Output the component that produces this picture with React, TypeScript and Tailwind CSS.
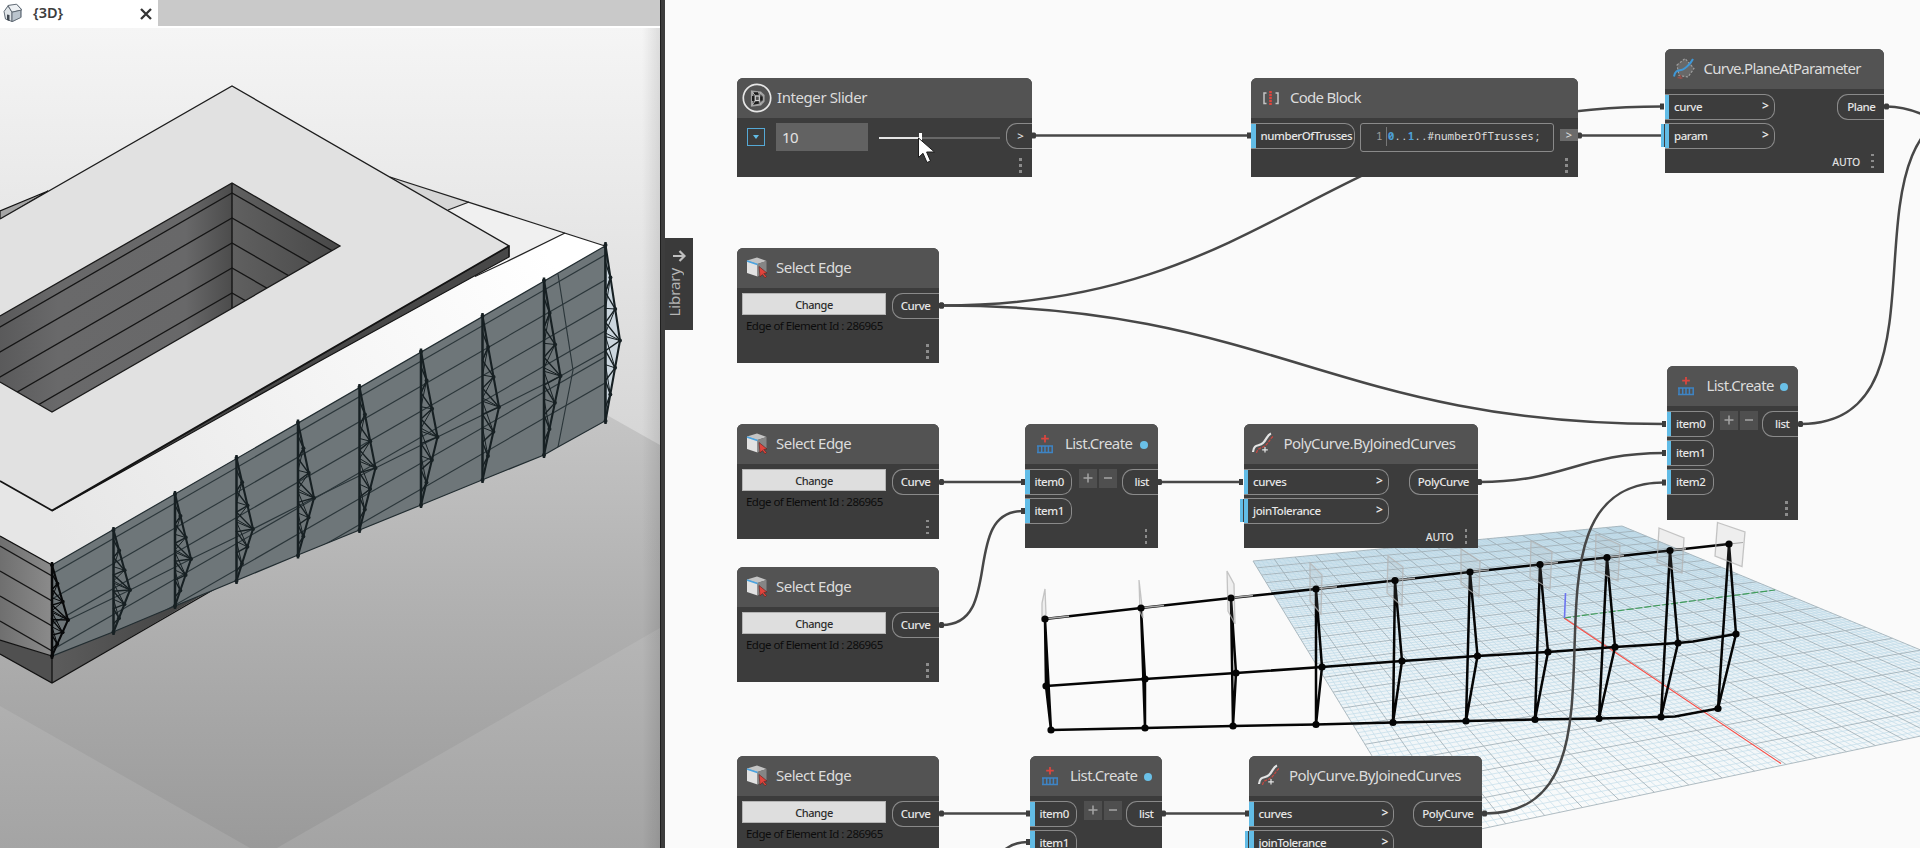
import React from "react";

type Pt = [number, number];
const pts = (a: Pt[]) => a.map((p) => p.join(",")).join(" ");
const lerp = (a: Pt, b: Pt, t: number): Pt => [a[0] + (b[0] - a[0]) * t, a[1] + (b[1] - a[1]) * t];

/* ---------- building viewport ---------- */

const trussTop: Pt[] = [[52, 565], [113.5, 530], [175, 494], [236.5, 458], [298, 422.5], [359.5, 387], [421, 351.5], [482.5, 316], [544, 280.5], [605.5, 245]];
const trussMid: Pt[] = [[68, 620], [130, 590], [191, 559], [253, 529], [314, 498], [375.5, 468], [437.5, 437], [499, 407], [560.5, 376], [620, 340.5]];
const trussBot: Pt[] = [[52, 656], [113.5, 632], [175, 606], [236.5, 581], [298, 555.5], [359.5, 530], [421, 505], [482.5, 480], [544, 455], [605.5, 421]];

function BuildingTruss({ i }: { i: number }) {
  const t = trussTop[i], m = trussMid[i], b = trussBot[i];
  const color = i === 0 ? "#08090a" : "#172023";
  const outer: Pt[] = [t, lerp(t, m, 0.34), lerp(t, m, 0.67), m, lerp(m, b, 0.34), lerp(m, b, 0.67), b];
  const inner = (f: number): Pt => [t[0], t[1] + (b[1] - t[1]) * f];
  const web: Pt[] = [inner(0.1), outer[1], inner(0.27), outer[2], inner(0.44), outer[3], inner(0.6), outer[4], inner(0.77), outer[5], inner(0.92)];
  const web2: Pt[] = [inner(0.27), outer[1], inner(0.36), outer[2], inner(0.5), outer[3], inner(0.52), outer[4], inner(0.68), outer[5]];
  return (
    <g stroke={color} fill="none">
      {i === 9 && <polygon points={pts([t, m, b])} fill="#cbd6de" stroke="none" />}
      <line x1={t[0]} y1={t[1] - 3} x2={b[0]} y2={b[1] + 3} strokeWidth="2.5" />
      <polyline points={pts([t, m, b])} strokeWidth="2.1" />
      <polyline points={pts(web)} strokeWidth="1.4" />
      <polyline points={pts(web2)} strokeWidth="1" />
      {[t, ...outer.slice(1, 6), b].map((p, k) => (
        <circle key={k} cx={p[0]} cy={p[1]} r="2" fill={color} stroke="none" />
      ))}
    </g>
  );
}

function Building() {
  const facade: Pt[] = [[52, 565], [605, 246], [605, 421], [558, 447], [544, 455], [482, 480], [421, 505], [298, 555], [175, 606], [113, 632], [52, 656]];
  const hole: Pt[] = [[232, 183], [340, 246], [52, 412], [0, 382], [0, 316]];
  return (
    <svg className="block h-[820px] w-[660px]" viewBox="0 28 660 820">
      <defs>
        <linearGradient id="sky" x1="0" y1="0" x2="0" y2="1">
          <stop offset="0" stopColor="#f5f5f5" /><stop offset="0.25" stopColor="#e6e6e6" />
          <stop offset="0.5" stopColor="#d6d6d6" /><stop offset="1" stopColor="#cfcfcf" />
        </linearGradient>
        <linearGradient id="ground" gradientUnits="userSpaceOnUse" x1="0" y1="420" x2="0" y2="848">
          <stop offset="0" stopColor="#c4c4c4" /><stop offset="0.45" stopColor="#b0b0b0" /><stop offset="1" stopColor="#9a9a9a" />
        </linearGradient>
        <linearGradient id="apron" gradientUnits="userSpaceOnUse" x1="0" y1="628" x2="0" y2="848">
          <stop offset="0" stopColor="#b6b6b6" /><stop offset="1" stopColor="#a4a4a4" />
        </linearGradient>
        <linearGradient id="parapet" gradientUnits="userSpaceOnUse" x1="60" y1="540" x2="540" y2="240">
          <stop offset="0" stopColor="#e6e6e6" /><stop offset="0.6" stopColor="#f6f6f6" /><stop offset="1" stopColor="#ffffff" />
        </linearGradient>
        <linearGradient id="wellL" gradientUnits="userSpaceOnUse" x1="0" y1="0" x2="232" y2="0">
          <stop offset="0" stopColor="#5a5a5b" /><stop offset="0.25" stopColor="#69696a" /><stop offset="0.8" stopColor="#686869" /><stop offset="1" stopColor="#4c4c4c" />
        </linearGradient>
        <linearGradient id="wellR" gradientUnits="userSpaceOnUse" x1="232" y1="0" x2="340" y2="0">
          <stop offset="0" stopColor="#606060" /><stop offset="1" stopColor="#484848" />
        </linearGradient>
        <linearGradient id="edge" x1="0" y1="0" x2="1" y2="0">
          <stop offset="0" stopColor="#000" stopOpacity="0" /><stop offset="1" stopColor="#000" stopOpacity="0.1" />
        </linearGradient>
        <linearGradient id="wallL" x1="0" y1="0" x2="1" y2="0">
          <stop offset="0" stopColor="#6f6f6f" /><stop offset="1" stopColor="#8b8b8b" />
        </linearGradient>
        <linearGradient id="under" gradientUnits="userSpaceOnUse" x1="52" y1="0" x2="218" y2="0">
          <stop offset="0" stopColor="#5c5c5c" /><stop offset="0.6" stopColor="#4a4a4a" /><stop offset="1" stopColor="#3c3c3c" />
        </linearGradient>
        <clipPath id="facadeClip"><polygon points={pts(facade)} /></clipPath>
        <clipPath id="holeClip"><polygon points={pts(hole)} /></clipPath>
        <clipPath id="leftClip"><polygon points="0,536 52,565 52,656 0,640" /></clipPath>
      </defs>
      <rect x="0" y="28" width="660" height="820" fill="url(#sky)" />
      <polygon points="0,380 540,380 605,414 660,445 660,848 0,848" fill="url(#ground)" />
      <polygon points="0,706 250,848 0,848" fill="url(#apron)" />
      <polygon points="660,628 277,848 660,848" fill="url(#apron)" />
      <rect x="642" y="28" width="18" height="820" fill="url(#edge)" />

      <polygon points="0,211 48,191 0,220" fill="#a5a5a5" stroke="#111" strokeWidth="1.2" />
      {/* sloped parapet and side walls */}
      <polygon points="390,177 469,202 565,233 605,246 52,565 0,536 0,440" fill="url(#parapet)" />
      <polygon points="390,177 469,202 448,210" fill="#d6d6d6" />
      <polygon points="448,210 469,202 565,233 509,262" fill="#f0f0f0" />
      <polyline points="390,177 605,246" stroke="#222" strokeWidth="1.3" fill="none" />
      <polyline points="448,210 469,202" stroke="#222" strokeWidth="1.3" fill="none" />
      <polyline points="565,233 508,261 475,276.500" stroke="#222" strokeWidth="1.3" fill="none" />

      {/* top slab */}
      <polygon points="509,246 509,257 320,361 52,511" fill="#484848" stroke="#141414" strokeWidth="1.2" />
      <polygon points="0,219 232,86 509,246 52,510 0,481" fill="#e1e1e1" />
      <polyline points="0,219 232,86 509,246 509,257" stroke="#1c1c1c" strokeWidth="1.3" fill="none" />
      <polyline points="509,246 52,510.5 0,481" stroke="#141414" strokeWidth="1.7" fill="none" />

      {/* courtyard */}
      <g clipPath="url(#holeClip)">
        <rect x="0" y="170" width="232" height="260" fill="url(#wellL)" />
        <rect x="232" y="170" width="120" height="160" fill="url(#wellR)" />
        {[193, 218, 243, 268, 293].map((y) => (
          <polyline key={y} points={`-10,${y + 139.7} 232,${y} 350,${y + 68}`} stroke="#151515" strokeWidth="1.3" fill="none" />
        ))}
        <line x1="232" y1="183" x2="232" y2="308" stroke="#151515" strokeWidth="1.4" />
      </g>
      <polyline points="0,316 232,183 340,246 52,412 0,382" stroke="#1a1a1a" strokeWidth="1.3" fill="none" />

      {/* lower volume */}
      <polygon points="0,640 52,656 52,683 0,654" fill="#505050" />
      <polygon points="52,656 218,586 52,683" fill="url(#under)" />
      <polyline points="0,654 52,683 218,587" stroke="#111" strokeWidth="1.3" fill="none" />
      <line x1="52" y1="656" x2="52" y2="683" stroke="#111" strokeWidth="1.3" />
      <polygon points="0,536 52,565 52,656 0,640" fill="url(#wallL)" />
      <g clipPath="url(#leftClip)" stroke="#151515" strokeWidth="1.3">
        {[546, 571, 596, 621].map((y) => <line key={y} x1="0" y1={y} x2="52" y2={y + 30} />)}
      </g>
      <polyline points="0,536 52,565" stroke="#111" strokeWidth="1.3" />
      <polyline points="0,640 52,656" stroke="#111" strokeWidth="1.3" />

      <polygon points={pts(facade)} fill="#6e7679" />
      <g clipPath="url(#facadeClip)" stroke="#2b363a" strokeWidth="1.15" fill="none">
        {[255, 280, 305, 331, 357, 383].map((y) => (
          <line key={y} x1="605" y1={y} x2="52" y2={y + 319} />
        ))}
        <polyline points={pts(trussMid.slice(0, 9).concat([[573, 369], [605, 351]]))} />
        <polyline points="558,274 573,370 558,447" />
      </g>
      <polygon points={pts(facade)} fill="none" stroke="#222d31" strokeWidth="1.2" />
      {trussTop.map((_, i) => <BuildingTruss key={i} i={i} />)}
    </svg>
  );
}

/* ---------- background preview: ground grid and frame ---------- */

const quad: Pt[] = [[1253, 561], [1622, 526], [2058, 707], [1424, 841]];
function project(u: number, v: number): Pt {
  const [[x0, y0], [x1, y1], [x2, y2], [x3, y3]] = quad;
  const dx1 = x1 - x2, dx2 = x3 - x2, dx3 = x0 - x1 + x2 - x3;
  const dy1 = y1 - y2, dy2 = y3 - y2, dy3 = y0 - y1 + y2 - y3;
  const det = dx1 * dy2 - dx2 * dy1;
  const g = (dx3 * dy2 - dx2 * dy3) / det;
  const h = (dx1 * dy3 - dx3 * dy1) / det;
  const w = g * u + h * v + 1;
  return [
    ((x1 - x0 + g * x1) * u + (x3 - x0 + h * x3) * v + x0) / w,
    ((y1 - y0 + g * y1) * u + (y3 - y0 + h * y3) * v + y0) / w,
  ];
}
const seg = (a: Pt, b: Pt) => `M${a[0].toFixed(1)} ${a[1].toFixed(1)}L${b[0].toFixed(1)} ${b[1].toFixed(1)}`;
let minor = "", major = "";
for (let k = 0; k <= 100; k++) {
  const f = k / 100;
  const d = seg(project(f, 0), project(f, 1)) + seg(project(0, f), project(1, f));
  if (k % 5 === 0) major += d; else minor += d;
}

const fTop: Pt[] = [[1045, 619], [1141, 608], [1231, 598], [1316, 589], [1395, 580.5], [1470, 572], [1540, 564.5], [1607, 557.5], [1670, 550.5], [1729, 544]];
const fMid: Pt[] = [[1046, 686], [1145, 679], [1236, 673], [1322, 667], [1402, 661], [1477.5, 656], [1548, 652], [1615, 647], [1678, 643], [1736, 634]];
const fBot: Pt[] = [[1051, 730], [1145, 728], [1233, 726], [1316, 724.5], [1393, 722.5], [1466, 721], [1535, 719.5], [1599, 718.5], [1661, 717], [1718, 708.5]];
const planes: Pt[][] = [
  [[1045, 589], [1042, 603], [1042, 620], [1046, 614]],
  [[1139, 580], [1140, 612], [1143, 618], [1142, 606]],
  [[1227, 571], [1234, 584], [1235, 624], [1228, 611]],
  [[1310, 563], [1322, 575], [1321, 614], [1310, 601]],
  [[1388, 556], [1403, 567], [1402, 606], [1387, 593]],
  [[1461, 549], [1480, 561], [1479, 597], [1461, 584]],
  [[1531, 541], [1552, 552], [1550, 589], [1530, 577]],
  [[1596, 534], [1620, 545], [1618, 581], [1595, 570]],
  [[1659, 528], [1684, 538], [1682, 573], [1657, 562]],
  [[1717.5, 522.5], [1745, 532], [1742, 566.5], [1715, 556]],
];

const wire = (x1: number, y1: number, x2: number, y2: number) => {
  const c = 0.45 * Math.hypot(x2 - x1, y2 - y1);
  return `M${x1} ${y1}C${x1 + c} ${y1} ${x2 - c} ${y2} ${x2} ${y2}`;
};
const wires: [number, number, number, number][] = [
  [1034, 135.5, 1249, 135.5], [1580, 135.5, 1663, 135.5], [942, 305.5, 1662, 106.5], [942, 305.5, 1664, 424],
  [942, 482, 1023, 482], [942, 625, 1023, 511], [1160, 482, 1241, 482], [1480, 482, 1664, 453],
  [1485, 813.5, 1664, 482.5], [1801, 424, 1988, 106], [942, 813.5, 1028, 813.5], [942, 957, 1028, 842],
  [1164, 813.5, 1247, 813.5],
];

function Scene() {
  return (
    <svg className="absolute inset-0 h-[848px] w-[1255px]" viewBox="665 0 1255 848">
      <defs>
        <linearGradient id="haze" gradientUnits="userSpaceOnUse" x1="0" y1="526" x2="0" y2="820">
          <stop offset="0" stopColor="#cfe2ec" /><stop offset="0.35" stopColor="#e6f0f5" /><stop offset="1" stopColor="#fafbfb" />
        </linearGradient>
      </defs>
      <polygon points={pts(quad)} fill="url(#haze)" />
      <path d={minor} stroke="#a9cfe2" strokeWidth="0.75" opacity="0.6" />
      <path d={major} stroke="#92a3ac" strokeWidth="0.95" opacity="0.75" />
      <path d="M1564 618L1781 763.5" stroke="#fa4a42" strokeWidth="1.1" />
      <path d="M1564 618L1775 590" stroke="#3f9d5c" strokeWidth="1.2" strokeDasharray="7 2" />
      <path d="M1564.500 618L1565.500 593" stroke="#6c74f0" strokeWidth="1.6" />

      <g stroke="#050505" strokeWidth="2.5" fill="none" strokeLinejoin="round">
        <polyline points={pts(fTop)} />
        <polyline points={pts([...fMid.slice(0, 9), [1693, 641.5], fMid[9]])} />
        <polyline points={pts([...fBot.slice(0, 9), [1675, 716.5], fBot[9]])} />
        {fTop.map((t, i) => <polygon key={i} points={pts([t, fMid[i], fBot[i]])} />)}
      </g>
      {planes.map((p, i) => (
        <polygon key={i} points={pts(p)} fill="#9a9a9a" fillOpacity="0.12" stroke="#b3b3b3" strokeOpacity="0.75" strokeWidth="1.3" />
      ))}
      {fTop.slice(0, 9).map((t, i) => {
        const w = 24 - i;
        return <line key={i} x1={t[0] + 3} y1={t[1] - 0.4} x2={t[0] + w} y2={t[1] - w * 0.112} stroke="#a8a8a8" strokeWidth="1.5" />;
      })}
      <line x1="1729" y1="544" x2="1743" y2="542.500" stroke="#a8a8a8" strokeWidth="1.2" />
      {[...fTop, ...fMid, ...fBot].map((p, i) => <circle key={i} cx={p[0]} cy={p[1]} r="3.6" fill="#050505" />)}

      <g stroke="#474747" strokeWidth="2.5" fill="none">
        {wires.map((w, i) => <path key={i} d={wire(...w)} />)}
        <path d="M1887 106.500C1905 106.500 1922 112 1945 126" />
      </g>
      <g fill="#3c3c3c">
        {wires.map(([a, b, c, d], i) => (
          <g key={i}>
            <rect x={a - 3} y={b - 3} width="5" height="6" rx="1.500" />
            <rect x={c - 2} y={d - 3} width="4" height="6" />
          </g>
        ))}
        <rect x="1884" y="103.500" width="5" height="6" rx="1.500" />
      </g>
    </svg>
  );
}

/* ---------- node icons ---------- */

function CubeIcon() {
  return (
    <svg className="h-6 w-6" viewBox="0 0 24 24">
      <path d="M2 4.500L12 1.500L21.500 5L12.500 8Z" fill="#c4c4c4" />
      <path d="M2 4.500L12.500 8V20.500L2 17Z" fill="#e2e2e2" />
      <path d="M12.500 8L21.500 5V16L12.500 20.500Z" fill="#858585" />
      <path d="M2 5L12.500 8.500" stroke="#4aa3e0" strokeWidth="1.800" />
      <path d="M14 10.500L22 17L18.800 17.500L21.500 20.500L20 21.800L17.500 18.600L15 20.800Z" fill="#e0443c" stroke="#5a2420" strokeWidth="0.6" />
    </svg>
  );
}
function ListIcon() {
  return (
    <svg className="h-6 w-6" viewBox="0 0 24 24">
      <path d="M12 3V10.500M8.200 6.700H15.800" stroke="#d9463f" strokeWidth="1.800" />
      <path d="M4 14H20M4 20.500H20M5 13.200V21.300M8.700 14V20.500M12 14V20.500M15.400 14V20.500M19.200 13.200V21.300" stroke="#3e84c4" strokeWidth="1.500" />
    </svg>
  );
}
function PolyIcon() {
  return (
    <svg className="h-6 w-6" viewBox="0 0 24 24" fill="none">
      <path d="M2 20C3 11 8 15 12 11S16 3 20 1.500" stroke="#e4e4e4" strokeWidth="2.200" />
      <path d="M5.500 21C6.500 15 11 17 15 13S19 7 22 4.500" stroke="#c9473f" strokeWidth="1.200" strokeDasharray="3 1.200" />
      <path d="M14 15V20.600M11.200 17.800H16.800" stroke="#e4e4e4" strokeWidth="1.200" />
    </svg>
  );
}
function PlaneIcon() {
  return (
    <svg className="h-6 w-6" viewBox="0 0 24 24" fill="none">
      <path d="M5 8L13 1.500L22 11.500L16 20L7 18.500Z" fill="#686868" stroke="#a2a2a2" strokeWidth="1.100" strokeDasharray="2.200 1.600" />
      <path d="M2 19.500C3.500 11 8.500 15 12.500 11.500S18 8 21 2" stroke="#3f97d6" strokeWidth="2" />
      <path d="M5.500 20.500L10.500 21M8.500 18V22" stroke="#94504b" strokeWidth="1.400" />
    </svg>
  );
}
function CodeIcon() {
  return (
    <svg className="h-5 w-5" viewBox="0 0 20 20" fill="none">
      <path d="M5.500 5H3V15.500H5.500M14.500 5H17V15.500H14.500" stroke="#c4c4c4" strokeWidth="1.500" />
      <path d="M9.500 3V17" stroke="#e0443c" strokeWidth="2.600" strokeDasharray="2.200 0.800" />
    </svg>
  );
}
function SliderIcon() {
  return (
    <svg className="h-[30px] w-[30px]" viewBox="0 0 30 30" fill="none">
      <circle cx="15" cy="15" r="13.700" stroke="#e6e6e6" strokeWidth="1.700" />
      <path d="M10 8.500L18.500 9.500L21.500 12.500V18L18.500 21.500L10 22.500Z" stroke="#a2a2a2" strokeWidth="2.200" />
      <path d="M11.500 10.500H16M11 20.500L16.500 19.500M19.500 13.500V17.500M11.200 13V18" stroke="#1c1c1c" strokeWidth="2.400" />
      <rect x="13.300" y="13" width="4" height="4.500" stroke="#d6d6d6" strokeWidth="1.100" />
      <path d="M10 8.500L13 12.500M10 22.500L13 18M18.500 9.500L17.500 12.500M18.500 21.500L17.500 18" stroke="#b9b9b9" strokeWidth="1" />
    </svg>
  );
}

/* ---------- nodes ---------- */

function Dots() {
  return (
    <div className="flex flex-col gap-[3.5px]">
      <i className="h-[2.5px] w-[2.5px] bg-[#8c8c8c]" />
      <i className="h-[2.5px] w-[2.5px] bg-[#8c8c8c]" />
      <i className="h-[2.5px] w-[2.5px] bg-[#8c8c8c]" />
    </div>
  );
}

function Node({ place, icon, title, titleClass = "", dot, auto, children }: {
  place: string; icon: React.ReactNode; title: string; titleClass?: string; dot?: boolean; auto?: boolean; children: React.ReactNode;
}) {
  return (
    <section className={`absolute flex flex-col rounded-t-[6px] bg-[#3c3c3c] ${place}`}>
      <header className="flex h-10 shrink-0 items-center rounded-t-[6px] bg-[#535353]">
        <span className="flex w-[39px] shrink-0 items-center justify-center">{icon}</span>
        <span className={`mb-px whitespace-nowrap text-[15px] text-[#dcdcdc] ${titleClass}`}>{title}</span>
        {dot && <i className="mt-0.5 mr-2.5 ml-auto h-2 w-2 rounded-full bg-[#6ac0e7]" />}
      </header>
      <div className="flex flex-1 items-start justify-between pt-[5px]">{children}</div>
      <footer className="flex h-[23px] items-center justify-end pr-[10.5px]">
        {auto && <span className="mt-[3px] mr-[11px] text-[10.5px] font-medium tracking-[-0.2px] text-[#e0e0e0]">AUTO</span>}
        <Dots />
      </footer>
    </section>
  );
}

function InPort({ label, width, arrow, outer }: { label: string; width: string; arrow?: boolean; outer?: boolean }) {
  return (
    <div className={`relative flex h-[25.5px] items-center rounded-r-[10px] border border-l-0 border-[#8a8a8a] text-[11.5px] font-medium tracking-[-0.45px] text-[#e6e6e6] ${width}`}>
      <i className="h-6 w-[4.5px] shrink-0 bg-[#62bce6]" />
      {outer && <i className="absolute top-0 -left-1 h-[23px] w-1 border-r border-[#3c3c3c] bg-[#62bce6]" />}
      <span className="mb-px ml-[5px] whitespace-nowrap">{label}</span>
      {arrow && <span className="mr-[5px] mb-px ml-auto text-[12px] font-semibold">&gt;</span>}
    </div>
  );
}
function OutPort({ label, width }: { label: string; width: string }) {
  return (
    <div className={`flex h-[25.5px] shrink-0 items-center justify-end rounded-l-[11px] border border-r-0 border-[#8a8a8a] pr-[8.5px] pb-px text-[11.5px] font-medium tracking-[-0.45px] text-[#e6e6e6] ${width}`}>
      {label}
    </div>
  );
}
const Ports = ({ children }: { children: React.ReactNode }) => <div className="flex flex-col gap-[3.5px]">{children}</div>;

function SelectEdge({ place }: { place: string }) {
  return (
    <Node place={place} icon={<CubeIcon />} title="Select Edge" titleClass="tracking-[-0.5px]">
      <div className="flex flex-col pl-[5px]">
        <button className="h-[22px] w-[144px] border border-[#b4b4b4] bg-[#dedede] text-[11px] leading-[17px] font-medium tracking-[-0.45px] text-[#2c2c2c]">Change</button>
        <span className="mt-[1.5px] ml-1 whitespace-nowrap text-[11.5px] leading-[18px] tracking-[-0.52px] text-[#0c0c0c]">Edge of Element Id : 286965</span>
      </div>
      <OutPort label="Curve" width="w-[47px]" />
    </Node>
  );
}

function ListCreate({ place, items }: { place: string; items: string[] }) {
  return (
    <Node place={place} icon={<ListIcon />} title="List.Create" titleClass="ml-px tracking-[-0.58px]" dot>
      <Ports>{items.map((it) => <InPort key={it} label={it} width="w-[47px]" />)}</Ports>
      <div className="ml-[3px] flex gap-[2px]">
        <span className="flex h-[18.5px] w-[18px] items-center justify-center bg-[#4f4f4f]"><svg className="h-2.5 w-2.5" viewBox="0 0 10 10"><path d="M5 0.500V9.500M0.500 5H9.500" stroke="#a5a5a5" strokeWidth="1.500" /></svg></span>
        <span className="flex h-[18.5px] w-[18px] items-center justify-center bg-[#4f4f4f]"><svg className="h-2.5 w-2.5" viewBox="0 0 10 10"><path d="M1 5H9" stroke="#a5a5a5" strokeWidth="1.500" /></svg></span>
      </div>
      <OutPort label="list" width="w-[36px]" />
    </Node>
  );
}

function PolyCurve({ place }: { place: string }) {
  return (
    <Node place={place} icon={<PolyIcon />} title="PolyCurve.ByJoinedCurves" titleClass="ml-px tracking-[-0.52px]" auto>
      <Ports>
        <InPort label="curves" width="w-[145px]" arrow />
        <InPort label="joinTolerance" width="w-[145px]" arrow outer />
      </Ports>
      <OutPort label="PolyCurve" width="w-[69px]" />
    </Node>
  );
}

export default function App() {
  return (
    <div className="flex h-[848px] w-[1920px] overflow-hidden font-['Noto_Sans','Open_Sans',sans-serif]">
      <div className="flex w-[660px] shrink-0 flex-col">
        <div className="flex h-[26px] bg-[#c9c9c9]">
          <div className="flex w-[158px] items-center bg-white pr-1.5 pl-[3px]">
            <svg className="h-5 w-5" viewBox="0 0 20 20">
              <path d="M1 8L5 2L14 1L19 6V14L10 19L2 16Z" fill="#b9c1c9" />
              <path d="M1 8.500L5 3L9 9V18.500L2.500 16Z" fill="#dfe4e8" stroke="#59636d" strokeWidth="0.900" />
              <path d="M5 2.500L13.500 1.200L18.800 7L9 9.200Z" fill="#eef1f4" stroke="#59636d" strokeWidth="0.900" />
              <path d="M9 9.200L17.800 7.200V14.500L9 18.600Z" fill="#bac4cd" stroke="#59636d" strokeWidth="0.900" />
              <path d="M4 17V11.500L6.500 12V18Z" fill="#3f474f" />
            </svg>
            <span className="ml-2.5 text-[14.5px] font-semibold text-[#3d3d3d]">{"{3D}"}</span>
            <svg className="mt-px ml-auto h-3 w-3" viewBox="0 0 12 12"><path d="M1 1L11 11M11 1L1 11" stroke="#333" strokeWidth="2.300" /></svg>
          </div>
        </div>
        <div className="h-0.5 bg-white" />
        <Building />
      </div>
      <div className="w-[5px] shrink-0 border-l border-[#1f1f1f] bg-[#3d3d3d]" />
      <main className="relative flex-1 overflow-hidden bg-[#fafafa]">
        <Scene />
        <aside className="absolute top-[238px] left-0 flex h-[92px] w-[27.5px] flex-col bg-[#3a3a3a] pt-[11px] text-[#b5b5b5]">
          <svg className="ml-[7px] h-3.5 w-3.5" viewBox="0 0 14 14" fill="none"><path d="M1 7H12.500M7.500 2L12.500 7L7.500 12" stroke="#c0c0c0" strokeWidth="2.200" /></svg>
          <span className="mt-[5px] w-[18px] rotate-180 text-[15px] leading-[18px] tracking-[-0.1px] [writing-mode:vertical-rl]">Library</span>
        </aside>

        <Node place="left-[72px] top-[78px] w-[295px] h-[99px]" icon={<SliderIcon />} title="Integer Slider" titleClass="ml-px tracking-[-0.42px]">
          <div className="flex">
            <span className="mt-[5px] ml-2.5 flex h-[18px] w-[18px] items-center justify-center border-[1.5px] border-[#55a9d6]">
              <svg className="h-1 w-1.5" viewBox="0 0 6 4"><path d="M0 0H6L3 4Z" fill="#62bce6" /></svg>
            </span>
            <span className="ml-[11px] flex h-7 w-[92px] items-center bg-[#626262] pt-px pl-1.5 text-[15px] tracking-[-0.5px] text-[#e2e2e2]">10</span>
            <span className="mt-2.5 ml-[11px] flex h-2.5 items-center">
              <i className="h-[2px] w-10 bg-[#e6e6e6]" />
              <i className="h-2.5 w-[3px] bg-white" />
              <i className="h-[1.5px] w-[78px] bg-[#686868]" />
            </span>
          </div>
          <OutPort label=">" width="w-[26px]" />
        </Node>

        <Node place="left-[586px] top-[78px] w-[327px] h-[99px]" icon={<CodeIcon />} title="Code Block" titleClass="tracking-[-0.72px]">
          <InPort label="numberOfTrusses" width="w-[104px]" />
          <div className="ml-[5px] flex h-[29px] w-[194px] items-center rounded-[3px] border border-[#8a8a8a] pb-[2px] pl-[15px] font-['Noto_Sans_Mono','DejaVu_Sans_Mono',monospace] text-[11px] tracking-[0.05px] whitespace-nowrap text-[#dcdcdc]">
            <span className="mr-[3px] text-[#9c9c9c]">1</span>
            <span className="h-[19px] w-px bg-[#777]" />
            <span className="ml-px"><b className="text-[#4d9fd6]">0</b>..<b className="text-[#4d9fd6]">1</b>..#numberOfTrusses;</span>
          </div>
          <span className="mt-1.5 ml-auto flex h-3 w-[18px] items-center justify-center bg-[#6b6b6b] text-[11px] text-[#e2e2e2]">&gt;</span>
        </Node>

        <Node place="left-[999.5px] top-[49px] w-[219.5px] h-[123.5px]" icon={<PlaneIcon />} title="Curve.PlaneAtParameter" titleClass="tracking-[-0.74px]" auto>
          <Ports>
            <InPort label="curve" width="w-[110px]" arrow />
            <InPort label="param" width="w-[110px]" arrow outer />
          </Ports>
          <OutPort label="Plane" width="w-[47.5px]" />
        </Node>

        <SelectEdge place="left-[72px] top-[248px] w-[202px] h-[115px]" />
        <SelectEdge place="left-[72px] top-[424px] w-[202px] h-[114.5px]" />
        <SelectEdge place="left-[72px] top-[567px] w-[202px] h-[115px]" />
        <SelectEdge place="left-[72px] top-[756px] w-[202px] h-[115px]" />
        <ListCreate place="left-[360px] top-[424px] w-[132.5px] h-[124px]" items={["item0", "item1"]} />
        <ListCreate place="left-[365px] top-[756px] w-[132px] h-[124px]" items={["item0", "item1"]} />
        <ListCreate place="left-[1001.5px] top-[366px] w-[131.5px] h-[154px]" items={["item0", "item1", "item2"]} />
        <PolyCurve place="left-[578.5px] top-[424px] w-[234px] h-[124px]" />
        <PolyCurve place="left-[584px] top-[756px] w-[233px] h-[124px]" />

        <svg className="absolute top-[137px] left-[252px] h-[27px] w-[20px]" viewBox="0 0 20 27">
          <path d="M1.500 1V20.500L6 16.300L10 25.500L13.500 24L9.600 15H17.500Z" fill="#fff" stroke="#1c1c1c" strokeWidth="1" />
        </svg>
      </main>
    </div>
  );
}
